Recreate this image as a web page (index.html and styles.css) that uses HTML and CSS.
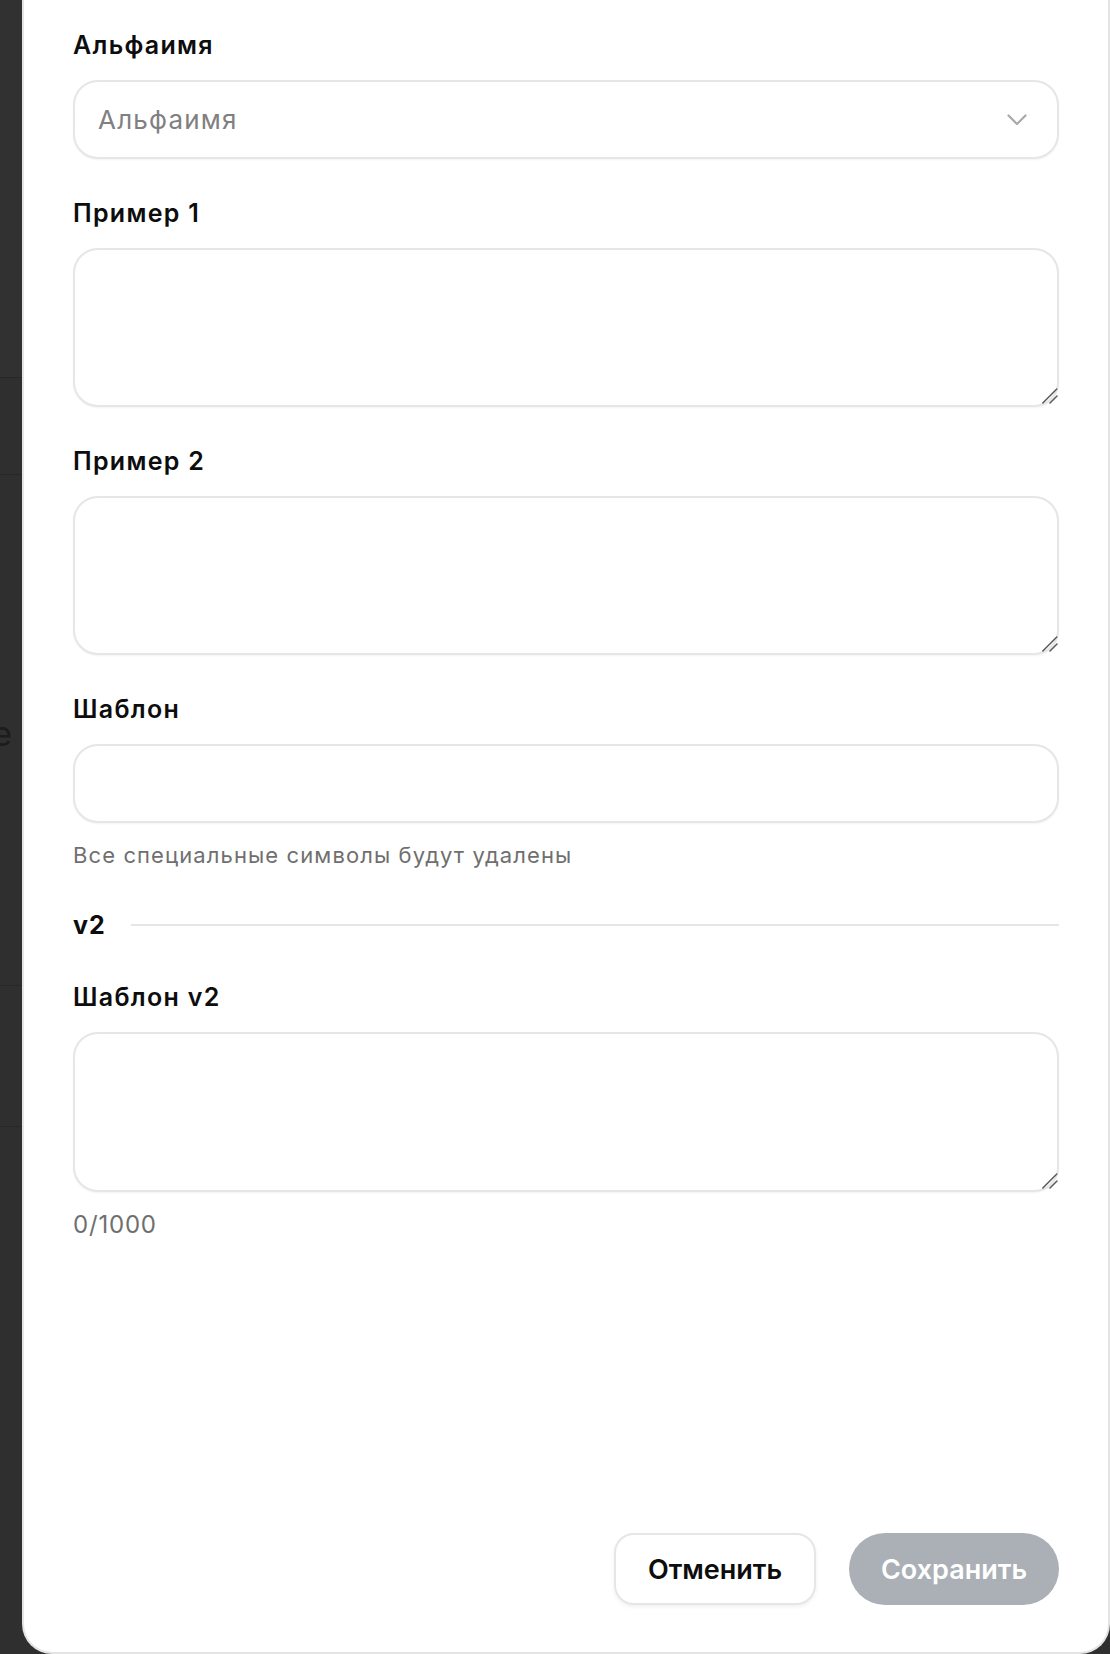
FILE: index.html
```html
<!DOCTYPE html>
<html lang="ru">
<head>
<meta charset="utf-8">
<title>Шаблон</title>
<link rel="stylesheet" href="styles.css">
</head>
<body>
<div class="screen">
  <div class="backdrop">
    <div class="bd-row bd-row-1"></div>
    <div class="bd-row bd-row-2"></div>
    <div class="bd-row bd-row-3"><span class="bd-text">e</span></div>
    <div class="bd-row bd-row-4"></div>
    <div class="bd-row bd-row-5"></div>
  </div>
  <aside class="panel">
    <form class="form">
      <div class="field">
        <label class="label">Альфаимя</label>
        <div class="select">
          <span class="select-placeholder">Альфаимя</span>
          <svg class="chevron" width="20" height="12" viewBox="0 0 20 12" aria-hidden="true">
            <path d="M1.5 1.5 L10 10 L18.5 1.5" fill="none" stroke="#a9a9a9" stroke-width="2.2" stroke-linecap="round" stroke-linejoin="round"/>
          </svg>
        </div>
      </div>
      <div class="field">
        <label class="label">Пример 1</label>
        <div class="ta-wrap">
          <textarea class="textarea"></textarea>
          <svg class="grip" width="16" height="16" viewBox="0 0 16 16" aria-hidden="true">
            <path d="M0.8 15 L14.8 1 M8 15 L15 8" stroke="#5a5a5a" stroke-width="1.5" stroke-linecap="round"/>
          </svg>
        </div>
      </div>
      <div class="field">
        <label class="label">Пример 2</label>
        <div class="ta-wrap">
          <textarea class="textarea"></textarea>
          <svg class="grip" width="16" height="16" viewBox="0 0 16 16" aria-hidden="true">
            <path d="M0.8 15 L14.8 1 M8 15 L15 8" stroke="#5a5a5a" stroke-width="1.5" stroke-linecap="round"/>
          </svg>
        </div>
      </div>
      <div class="field">
        <label class="label">Шаблон</label>
        <input class="input" type="text">
        <div class="hint">Все специальные символы будут удалены</div>
      </div>
      <div class="divider">
        <span class="divider-title">v2</span>
        <span class="divider-line"></span>
      </div>
      <div class="field field-v2">
        <label class="label">Шаблон v2</label>
        <div class="ta-wrap">
          <textarea class="textarea textarea-v2"></textarea>
          <svg class="grip" width="16" height="16" viewBox="0 0 16 16" aria-hidden="true">
            <path d="M0.8 15 L14.8 1 M8 15 L15 8" stroke="#5a5a5a" stroke-width="1.5" stroke-linecap="round"/>
          </svg>
        </div>
        <div class="counter">0/1000</div>
      </div>
    </form>
    <div class="footer">
      <button type="button" class="btn btn-cancel">Отменить</button>
      <button type="button" class="btn btn-save">Сохранить</button>
    </div>
  </aside>
</div>
</body>
</html>
```

FILE: styles.css
```css
* { box-sizing: border-box; }

html, body {
  margin: 0;
  padding: 0;
  background: #2f2f2f;
}

body {
  font-family: Inter, "Noto Sans", "Liberation Sans", sans-serif;
  color: #0d0d0d;
}

.screen {
  display: flex;
  width: 1110px;
  height: 1654px;
}

/* dimmed page behind the drawer */
.backdrop {
  width: 22px;
  flex: none;
  background: #2f2f2f;
  overflow: hidden;
  display: flex;
  flex-direction: column;
}
.bd-row { border-bottom: 1px solid #272727; flex: none; }
.bd-row-1 { height: 378px; background: #313131; }
.bd-row-2 { height: 97px; }
.bd-row-3 {
  height: 511px;
  display: flex;
  align-items: center;
  justify-content: flex-end;
}
.bd-row-4 { height: 141px; }
.bd-row-5 { flex: 1; border-bottom: none; }
.bd-text {
  font-family: Inter, "Liberation Sans", sans-serif;
  font-size: 34px;
  line-height: 34px;
  color: #1c1c1c;
  margin-right: 10px;
  margin-top: 8px;
}

/* drawer */
.panel {
  flex: 1;
  height: 1654px;
  background: #ffffff;
  border-left: 2px solid #e4e4e4;
  border-right: 2px solid #e4e4e4;
  border-bottom: 2px solid #e4e4e4;
  border-radius: 0 0 30px 30px;
  padding: 30px 49px 47px 49px;
  display: flex;
  flex-direction: column;
}

.form {
  flex: 1;
  display: flex;
  flex-direction: column;
}

.field { display: flex; flex-direction: column; }
.field + .field { margin-top: 39px; }

.label {
  font-size: 25px;
  line-height: 30px;
  font-weight: 600;
  letter-spacing: 1.3px;
  color: #0d0d0d;
  margin-bottom: 20px;
}

.select,
.input {
  height: 79px;
  border: 2px solid #e6e6e6;
  border-radius: 25px;
  background: #fff;
  box-shadow: 0 1px 2px rgba(0, 0, 0, 0.05);
}

.select {
  display: flex;
  align-items: center;
  justify-content: space-between;
  padding: 0 30px 0 23px;
}
.select-placeholder {
  font-size: 26px;
  letter-spacing: 1.2px;
  color: #808080;
}
.chevron { display: block; }

.input {
  width: 100%;
  padding: 0 23px;
  font-family: inherit;
  font-size: 25px;
  outline: none;
}

.ta-wrap { position: relative; }

.textarea {
  display: block;
  width: 100%;
  height: 159px;
  border: 2px solid #e6e6e6;
  border-radius: 25px;
  background: #fff;
  box-shadow: 0 1px 2px rgba(0, 0, 0, 0.05);
  padding: 18px 23px;
  font-family: inherit;
  font-size: 25px;
  resize: none;
  outline: none;
}
.textarea-v2 { height: 160px; }

.grip {
  position: absolute;
  right: 1px;
  bottom: 3px;
  display: block;
  pointer-events: none;
}

.hint,
.counter {
  margin-top: 18px;
  color: #6f6f6f;
}
.hint {
  font-size: 22px;
  line-height: 28px;
  letter-spacing: 1.1px;
}
.counter {
  font-size: 24px;
  line-height: 30px;
  letter-spacing: 0.8px;
}

.divider {
  margin-top: 41px;
  display: flex;
  align-items: center;
  gap: 25px;
}
.divider-title {
  font-size: 25px;
  line-height: 30px;
  font-weight: 700;
  letter-spacing: 1px;
}
.divider-line {
  flex: 1;
  height: 2px;
  background: #e6e6e6;
}

.field.field-v2 { margin-top: 42px; }

.footer {
  display: flex;
  justify-content: flex-end;
  gap: 33px;
}

.btn {
  font-family: inherit;
  font-size: 27px;
  font-weight: 600;
  height: 72px;
  cursor: pointer;
}
.btn-cancel {
  width: 202px;
  background: #fff;
  color: #0d0d0d;
  border: 2px solid #e6e6e6;
  border-radius: 20px;
  box-shadow: 0 2px 4px rgba(0, 0, 0, 0.06);
}
.btn-save {
  width: 210px;
  background: #abb0b6;
  color: #ffffff;
  border: none;
  border-radius: 36px;
}
```
